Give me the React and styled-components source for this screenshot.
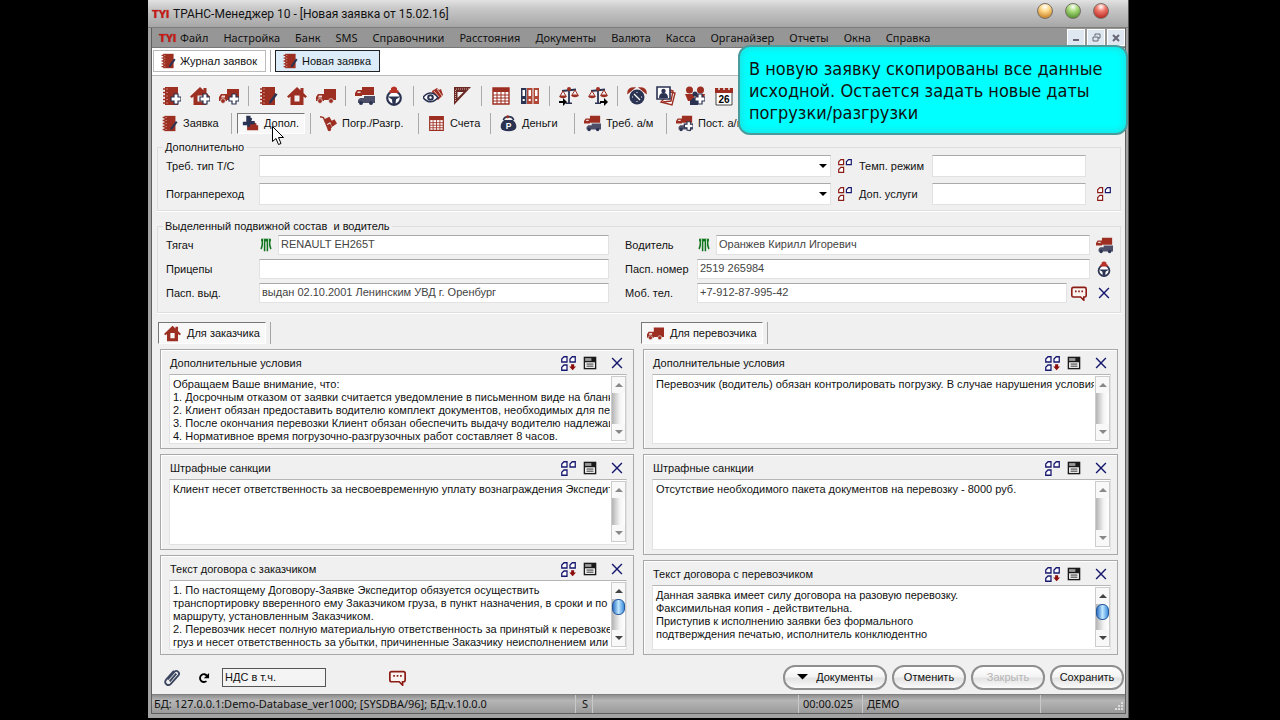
import React from 'react';
import styled, { createGlobalStyle } from 'styled-components';

const RED = '#9c2f22';
const NAVY = '#2b3352';

const GlobalStyle = createGlobalStyle`
  * {
    box-sizing: border-box;
  }
  body {
    margin: 0;
    background: #000;
    color: #111;
    font: 11px/14px 'Liberation Sans', Arial, sans-serif;
  }
  button, input, select, textarea {
    font: inherit;
    color: inherit;
    margin: 0;
  }
`;

const Stage = styled.div`
  display: flex;
  min-height: 100vh;
  padding: 0 151px 3px 148px;
  background: #000;
`;

const Window = styled.div`
  position: relative;
  flex: 1;
  min-width: 0;
  display: flex;
  flex-direction: column;
  padding: 0 2px 4px 3px;
  background: #a3a3a3;
  border-right: 1px solid #555;
`;

const TitleBar = styled.header`
  display: flex;
  align-items: center;
  gap: 4px;
  height: 28px;
  margin: 0 -2px 0 -3px;
  padding: 0 19px 0 4px;
  background: linear-gradient(#e2e2e2, #c9c9c9 30%, #a6a6a6);
  border-bottom: 1px solid #7c7c7c;
`;

const Title = styled.h1`
  flex: 1;
  margin: 0;
  font: 12px/16px Roboto, sans-serif;
`;

const Logo = styled.span`
  width: 17px;
  color: #d01818;
  font: bold 11px/12px 'Liberation Sans', sans-serif;
  text-shadow: 0 0 1px #7a0c0c;
`;

const Orbs = styled.div`
  display: flex;
  gap: 12px;
  margin-bottom: 6px;
`;

const Orb = styled.button`
  width: 16px;
  height: 16px;
  padding: 0;
  border: 1px solid #77706a;
  border-radius: 50%;
  background: radial-gradient(circle at 50% 20%, #fff 0, ${(p) => p.$light} 35%, ${(p) => p.$dark} 90%);
`;

const Client = styled.div`
  flex: 1;
  display: flex;
  flex-direction: column;
  background: #f0f0f0;
  border: 1px solid #5e5e5e;
  border-top: 0;
`;

const MenuBar = styled.nav`
  display: flex;
  align-items: center;
  height: 20px;
  padding: 0 0 0 7px;
  background: #969696;
  border-bottom: 1px solid #777;
`;

const MenuLink = styled.a`
  margin-left: ${(p) => (p.$first ? 4 : 15)}px;
  color: #111;
  font: 11px/18px 'Noto Sans', sans-serif;
  text-decoration: none;
`;

const ChildControls = styled.div`
  display: flex;
  gap: 2px;
  margin-left: auto;
`;

const ChildButton = styled.button`
  display: flex;
  align-items: center;
  justify-content: center;
  width: 18px;
  height: 17px;
  padding: 0;
  border: 1px solid #fff;
  background: #dfe7f1;
`;

const DocTabs = styled.div`
  display: flex;
  align-items: center;
  height: 28px;
  padding: 0 1px 2px;
  background: #fff;
  border-bottom: 1px solid #bbb;
`;

const DocTab = styled.button`
  display: flex;
  align-items: center;
  gap: 4px;
  height: 22px;
  width: ${(p) => p.$w}px;
  padding: 0 6px;
  white-space: nowrap;
  border: 1px solid ${(p) => (p.$active ? '#222' : '#bbb')};
  background: ${(p) => (p.$active ? '#dcecf9' : '#fff')};
`;

const Sep = styled.span`
  width: 1px;
  height: 22px;
  margin: 0 ${(p) => p.$gap || 0}px;
  background: #a5a5a5;
`;

const ToolRow = styled.div`
  display: flex;
  align-items: center;
  height: 30px;
  margin-top: 5px;
  padding-left: 9px;
`;

const ToolGroup = styled.div`
  display: flex;
  gap: 9px;

  & + & {
    margin-left: 9px;
    padding-left: 9px;
    border-left: 1px solid #aaa;
  }
`;

const IconButton = styled.button`
  display: inline-flex;
  flex: none;
  align-items: center;
  justify-content: center;
  width: 20px;
  height: 20px;
  padding: 0;
  border: 0;
  background: none;
`;

const SectionTabs = styled.div`
  display: flex;
  align-items: center;
  height: 29px;
  padding-bottom: 5px;
`;

const SectionCell = styled.div`
  display: flex;
  align-items: center;
  flex: none;
  width: ${(p) => p.$w}px;
  padding: 0 5px;
  border-right: 1px solid #aaa;
`;

const SectionTab = styled.button`
  position: relative;
  display: flex;
  align-items: center;
  gap: 5px;
  height: 21px;
  width: 100%;
  padding: 0 4px;
  border: ${(p) => (p.$active ? '1px solid' : '0')};
  border-color: #777 #fff #fff #777;
  background: ${(p) => (p.$active ? '#f8f8f8' : 'none')};
  text-align: left;
  white-space: nowrap;
`;

const Cursor = styled.svg`
  position: absolute;
  left: 34px;
  top: 12px;
  z-index: 2;
`;

const Group = styled.fieldset`
  min-width: 0;
  margin: 0 4px ${(p) => p.$after}px 5px;
  padding: 0 6px ${(p) => p.$bottom}px 8px;
  border: 1px solid #dedede;
  box-shadow: 0 1px 0 #fff;
`;

const Legend = styled.legend`
  margin-left: -3px;
  padding: 0 2px;
  line-height: 14px;
  white-space: pre;
`;

const ExtraGrid = styled.div`
  display: grid;
  grid-template-columns: 93px 1fr 28px 73px 154px 28px;
  row-gap: 6px;
  align-items: center;
  margin-top: 1px;

  & > button {
    justify-self: center;
  }
  & > button:last-child {
    justify-self: end;
  }
`;

const field = `
  height: 22px;
  width: 100%;
  min-width: 0;
  padding: 0 3px 2px 2px;
  border: 1px solid #e2e2e2;
  border-top-color: #aaa;
  border-radius: 0;
  background: #fff;
  outline: 0;
`;

const Input = styled.input`
  ${field}
  color: #444;
`;

const SlimInput = styled(Input)`
  height: 20px;
`;

const SelectBox = styled.div`
  position: relative;
`;

const Select = styled.select`
  ${field}
  display: block;
  appearance: none;
`;

const Arrow = styled.svg`
  position: absolute;
  right: 4px;
  top: 9px;
  pointer-events: none;
`;

const CrewGrid = styled.div`
  display: grid;
  grid-template-columns: 443fr 489fr;
  column-gap: 16px;
  row-gap: 4px;
  margin-top: 2px;
`;

const CrewRow = styled.div`
  display: flex;
  align-items: center;
  height: 20px;
`;

const CrewLabel = styled.label`
  flex: none;
  width: ${(p) => p.$w}px;
`;

const Tacho = styled.span`
  flex: none;
  display: flex;
  width: 19px;
`;

const Trail = styled.div`
  flex: none;
  display: flex;
  gap: 5px;
  width: ${(p) => (p.$wide ? 47 : 24)}px;
  justify-content: flex-end;
`;

const Columns = styled.div`
  display: grid;
  grid-template-columns: 474fr 475fr;
  column-gap: 9px;
  padding: 0 7px 0 8px;
`;

const Column = styled.section`
  min-width: 0;
`;

const PartyTab = styled.div`
  display: flex;
  align-items: center;
  gap: 4px;
  margin: 0 0 5px -2px;
`;

const PartyButton = styled(SectionTab)`
  width: auto;
  height: 22px;
  gap: 6px;
  padding: 0 5px;
`;

const Panel = styled.div`
  margin-bottom: 5px;
  padding: 0 6px 4px 8px;
  border: 1px solid #a8a8a8;
  box-shadow: inset 1px 1px 0 #fff;
`;

const PanelHead = styled.div`
  display: flex;
  align-items: center;
  height: 24px;
  padding: 2px 0 0 1px;
`;

const PanelTitle = styled.label`
  flex: 1;
`;

const PanelTools = styled.div`
  display: flex;
  gap: 2px;

  & > :last-child {
    margin-left: 5px;
  }
`;

const Memo = styled.div`
  display: flex;
  height: ${(p) => p.$h}px;
  border: 1px solid #e2e2e2;
  border-top-color: #b5b5b5;
  background: #fff;
`;

const MemoText = styled.textarea`
  flex: 1;
  min-width: 0;
  padding: 3px 0 0 3px;
  border: 0;
  resize: none;
  overflow: hidden;
  background: none;
  line-height: 13px;
  outline: 0;
`;

const Track = styled.div`
  display: flex;
  flex-direction: column;
  align-items: center;
  justify-content: space-between;
  width: 15px;
  margin: 1px 0 2px 1px;
  border: 1px solid #ccc;
  background: linear-gradient(90deg, #b4b4b4, #f4f4f4 60%, #fff);
`;

const TrackEnd = styled.button`
  display: flex;
  align-items: center;
  justify-content: center;
  width: 100%;
  height: 16px;
  padding: 0;
  border: 0;
  background: #f8f8f8;
`;

const Thumb = styled.span`
  width: 13px;
  height: 16px;
  margin-bottom: auto;
  border: 1px solid #24569a;
  border-radius: 6px;
  background: linear-gradient(90deg, #2f74c4, #bfe6ff 50%, #3f8fdc);
`;

const Footer = styled.footer`
  display: flex;
  align-items: center;
  height: 34px;
  margin-top: auto;
  padding: 0 1px 0 10px;
`;

const FooterTools = styled.div`
  display: flex;
  gap: 12px;
`;

const VatInput = styled.input`
  width: 104px;
  height: 19px;
  margin: 0 61px 0 8px;
  padding: 0 2px;
  border: 1px solid #555;
  background: #f4f4f4;
`;

const Actions = styled.div`
  display: flex;
  gap: 5px;
  margin-left: auto;
`;

const PillButton = styled.button`
  display: flex;
  align-items: center;
  justify-content: center;
  gap: 8px;
  width: ${(p) => p.$w}px;
  height: 25px;
  padding: 0;
  border: 2px solid #8f8f8f;
  border-radius: 12px;
  background: linear-gradient(#fff, #f3f3f3 48%, #e2e2e2 52%, #fafafa);

  &:disabled {
    color: #b5b5b5;
  }
`;

const StatusBar = styled.div`
  display: grid;
  grid-template-columns: 424fr 17px 206fr 64px 178fr 84px;
  height: 19px;
  background: linear-gradient(#8e8e8e, #b6b6b6 30%, #9a9a9a);
  border-top: 1px solid #808080;
  font: 11px/18px 'Noto Sans', sans-serif;
`;

const StatusCell = styled.div`
  padding-left: ${(p) => p.$pad || 4}px;
  border-right: 1px solid #c9c9c9;
  white-space: nowrap;

  &:last-child {
    display: flex;
    align-items: flex-end;
    justify-content: flex-end;
    border-right: 0;
  }
`;

const Callout = styled.div`
  position: absolute;
  top: 45px;
  right: 0;
  z-index: 3;
  width: 390px;
  padding: 11px 0 9px 9px;
  border: 2px solid #4a9c9c;
  border-radius: 12px;
  background: #00ffff;
  box-shadow: inset 0 0 6px 3px #16e8e8;
  font: 18px/22px 'DejaVu Sans Condensed', Tahoma, sans-serif;
  white-space: nowrap;
`;

// Pictograms, all on a 20x20 grid

const Svg = ({ size = 20, children }) => (
  <svg width={size} height={size} viewBox="0 0 20 20" aria-hidden="true">
    {children}
  </svg>
);

const Plus = () => (
  <path
    d="M13 8h4v3h3v4h-3v3h-4v-3h-3v-4h3z"
    fill="#fff"
    stroke={NAVY}
    strokeWidth="1.2"
  />
);

const BookShape = () => (
  <>
    <path d="M4 1h13v18H4z" fill={RED} />
    <path d="M2 3h4M2 6.500h4M2 10h4M2 13.500h4M2 17h4" stroke={RED} strokeWidth="1.600" />
    <path d="M5.500 3h1M5.500 6.500h1M5.500 10h1M5.500 13.500h1M5.500 17h1" stroke="#e9c4bd" strokeWidth="1.200" />
  </>
);

const HouseShape = () => (
  <path
    d="M10 1L0 10.500l1.800 1.500L3.500 10.500V19h13v-8.500l1.700 1.500 1.800-1.500-3.500-3.500V2h-3v2.200zM7.500 9.500h5v6h-5z"
    fill={RED}
    fillRule="evenodd"
  />
);

const TruckShape = () => (
  <g fill={RED}>
    <path d="M8 3h12v11H8zM2 8h6v7H0v-4z" />
    <circle cx="4" cy="15" r="2.400" stroke="#f0f0f0" strokeWidth=".7" />
    <circle cx="15" cy="15" r="2.400" stroke="#f0f0f0" strokeWidth=".7" />
    <path d="M3 9.500h3v2H2z" fill="#f0d8d4" />
  </g>
);

const TrucksShape = () => (
  <>
    <path d="M7 1h12v8H7zM2 4h5v6H0V7z" fill={RED} />
    <path d="M9 10h11v7H9zM5 12h4v5H3v-3z" fill="#4d4f68" />
    <circle cx="6" cy="17" r="2" fill={NAVY} />
    <circle cx="16" cy="17" r="2" fill={NAVY} />
    <path d="M3 5.500h2.500V7H2z" fill="#f0d8d4" />
  </>
);

const ScaleShape = ({ right }) => (
  <>
    <path d="M10 3v14M3 5l14-1.500" stroke={NAVY} strokeWidth="1.800" />
    <circle cx="10" cy="3" r="2" fill={RED} />
    <path d="M7 18h6v-1.500H7z" fill={NAVY} />
    <path d="M4 5L1 10h6zM16 4l-3 5h6z" fill="none" stroke={RED} />
    <path d="M0 10h8c-1 3-7 3-8 0zM12 9h8c-1 3-7 3-8 0z" fill={RED} />
    <path
      d={right ? 'M12 15h4v-3l4 4-4 4v-3h-4z' : 'M0 15h4v-3l4 4-4 4v-3H0z'}
      fill="#000"
    />
  </>
);

// small sheet of paper with a cut corner
const sheet = (x, y) => `M${x + 3} ${y}h4v7h-7v-4z`;

const PickShape = ({ color = '#16186e' }) => (
  <g fill="#fff" strokeWidth="1.700" stroke={color}>
    <path d={sheet(1, 1)} />
    <path d={sheet(12, 1)} stroke="#16186e" />
    <path d={sheet(1, 12)} />
  </g>
);

const icons = {
  book: (
    <>
      <BookShape />
      <path d="M17.500 7l2 1.500-6 8-2.500 1.500.5-3z" fill={NAVY} />
    </>
  ),
  bookAdd: (
    <>
      <BookShape />
      <Plus />
    </>
  ),
  house: <HouseShape />,
  houseAdd: (
    <>
      <HouseShape />
      <Plus />
    </>
  ),
  truck: <TruckShape />,
  truckAdd: (
    <>
      <TruckShape />
      <Plus />
    </>
  ),
  trucks: <TrucksShape />,
  trucksAdd: (
    <>
      <TrucksShape />
      <Plus />
    </>
  ),
  wheel: (
    <>
      <circle cx="10" cy="12" r="6.800" fill="#fff" stroke={NAVY} strokeWidth="2.200" />
      <path d="M3.500 10.500h13L12 13.500l-.5 5h-3l-.5-5z" fill={NAVY} />
      <path d="M5.500 7V4.500L7 4V2q3-3 6 0v2l1.500.5V7z" fill="#b83228" />
    </>
  ),
  eye: (
    <>
      <path d="M9 5l5-3 2 2 2-1 2 6-5 5-5-4z" fill={RED} />
      <path d="M11 5l5 6M14 3l5 7" stroke="#e8b9b0" />
      <path d="M0 11.500q7.500-9 15 0-7.500 8.500-15 0z" fill="#fff" stroke={NAVY} strokeWidth="1.600" />
      <circle cx="7.500" cy="11.500" r="3.300" fill={NAVY} />
      <circle cx="7.500" cy="11.500" r="1.200" fill="#fff" />
    </>
  ),
  square: (
    <>
      <path d="M2 1h17L2 19zM5.500 6v6l6-6z" fill="#6b2a26" fillRule="evenodd" />
      <path d="M4 3h13M3.500 4v11" stroke="#e0b0a8" strokeDasharray="1 1" />
    </>
  ),
  table: (
    <>
      <path d="M2 2h16v16H2z" fill="#fff" stroke={RED} strokeWidth="1.400" />
      <path d="M2 2h16v4H2z" fill={RED} />
      <path d="M2 9h16M2 12h16M2 15h16M6 6v12M10 6v12M14 6v12" stroke={RED} />
    </>
  ),
  binders: (
    <>
      <path d="M1 2h5.500v16H1z" fill={NAVY} />
      <path d="M7 2h5.500v16H7zM13.500 2H19v16h-5.500z" fill="#b04636" />
      <path d="M2.500 4h2.500v6H2.500zM8.500 4H11v6H8.500zM15 4h2.500v6H15z" fill="#fff" />
      <path d="M3.700 13v2M9.700 13v2M16.200 13v2" stroke="#fff" strokeWidth="2" />
    </>
  ),
  scaleIn: <ScaleShape />,
  scaleOut: <ScaleShape right />,
  alarm: (
    <>
      <path d="M1 7q0-5 6-5zM19 7q0-5-6-5z" fill={RED} stroke={RED} strokeWidth="1.500" />
      <circle cx="10" cy="11" r="7.500" fill={NAVY} />
      <path d="M7 8l3 3M10 11l3 3" stroke="#fff" fill="none" strokeWidth="1.300" />
      <path d="M5 11h1M14 11h1M10 6v1M10 15v1" stroke="#fff" />
    </>
  ),
  photos: (
    <>
      <path d="M14 6l5 1-3 12-11-3z" fill="#fff" stroke={RED} strokeWidth="1.400" />
      <path d="M14 4l3 1-2 10-8 1" fill="none" stroke={RED} strokeWidth="1.400" />
      <path d="M1 1h13v12H1z" fill="#fff" stroke={NAVY} strokeWidth="1.600" />
      <circle cx="7.500" cy="5" r="2.200" fill={NAVY} />
      <path d="M3 12q0-5 4.500-5t4.500 5z" fill={NAVY} />
    </>
  ),
  people: (
    <>
      <circle cx="4.500" cy="4" r="3.500" fill={RED} />
      <circle cx="15.500" cy="4" r="3.500" fill={RED} />
      <path d="M0 8h9v7H3zM11 8h9l-2 7h-7z" fill={RED} />
      <circle cx="10" cy="8" r="2.500" fill={NAVY} />
      <path d="M5 19v-4l3-3h5v7z" fill={NAVY} />
      <Plus />
    </>
  ),
  date: (
    <>
      <path d="M2 3h16v16H2z" fill="#fff" stroke="#444" />
      <path d="M1 2h18v5H1z" fill={RED} />
      <path d="M5 0v4M10 0v4M15 0v4" stroke="#f0f0f0" strokeWidth="1.500" />
      <text x="10" y="17" textAnchor="middle" fontSize="10" fontWeight="bold" fontFamily="Liberation Sans">
        26
      </text>
    </>
  ),
  extra: (
    <>
      <path d="M9 10h4q2-2 4 0v2h2v6H6v-4z" fill={RED} />
      <path d="M5 1h5v2l2 1-1 3h4v4h-5l-1 3H6v-2H1V8h4z" fill={NAVY} />
    </>
  ),
  cart: (
    <>
      <path d="M5 5l6-3 3 5-6 4zM12 8l5-3 3 5-6 4zM8 12l4-2 2 5-3 2z" fill={RED} />
      <path d="M0 2l4 1 6 14" fill="none" stroke={RED} strokeWidth="1.800" />
      <circle cx="11" cy="17" r="2" fill={RED} />
    </>
  ),
  purse: (
    <>
      <path d="M5 6q-5 4-4 9 1 4 9 4t9-4q1-5-4-9z" fill={NAVY} />
      <path d="M4 6q1-4 6-4t6 4" fill="none" stroke={NAVY} strokeWidth="2" />
      <circle cx="9" cy="2" r="1.800" fill={RED} />
      <text x="10" y="16" textAnchor="middle" fontSize="10" fontWeight="bold" fontFamily="Liberation Sans" fill="#fff">
        Р
      </text>
    </>
  ),
  tacho: (
    <>
      <path d="M3 1h14v4H3z" fill="#11741e" />
      <path d="M5 4q0 8-2 12M15 4q0 8 2 12M8 4v15M12 4v15" fill="none" stroke="#11741e" strokeWidth="2.200" />
      <path d="M6.500 1v6M13.500 1v6" stroke="#d9f0d9" strokeWidth="1.200" />
    </>
  ),
  chat: (
    <>
      <path
        d="M3 3h14q2 0 2 2v8q0 2-2 2h-1v4l-4-4H3q-2 0-2-2V5q0-2 2-2z"
        fill="#fbf3f0"
        stroke="#8c1c16"
        strokeWidth="2"
      />
      <path d="M5 8h2M9 8h2M13 8h2" stroke="#8c1c16" strokeWidth="2" />
    </>
  ),
  cross: <path d="M3 3l14 14M17 3L3 17" stroke="#16186e" strokeWidth="2" />,
  save: (
    <>
      <path d="M1 1h18v18H1z" fill="#1a1a1a" />
      <path d="M3 3h9v4H3z" fill="#9a9a9a" />
      <path d="M3 9h14v8H3z" fill="#fff" />
      <path d="M5 11.500h10M5 14.500h10" stroke="#222" strokeWidth="1.400" />
    </>
  ),
  clip: (
    <path
      d="M5 12l7-8q2-2 4 0t0 4l-8 9q-2 2-4.500 0t0-5l8-9M7 14l7-8"
      fill="none"
      stroke="#3c4660"
      strokeWidth="2"
    />
  ),
  redo: (
    <>
      <path d="M13 15.500a6 6 0 1 1 1-8" fill="none" stroke="#000" strokeWidth="2.800" />
      <path d="M17 3v8H9z" fill="#000" />
    </>
  ),
  pick: <PickShape color="#8c1c16" />,
  pickBlue: <PickShape />,
  pickDown: (
    <>
      <PickShape />
      <path d="M13.500 11h4v3h2.500l-4.500 5-4.500-5h2.500z" fill="#8c0c0c" />
    </>
  ),
};

const Icon = ({ name, size }) => <Svg size={size}>{icons[name]}</Svg>;

const Triangle = ({ up, color = '#000', size = 8 }) => (
  <svg width={size} height={size / 2} viewBox="0 0 8 4" aria-hidden="true">
    <path d={up ? 'M0 4h8L4 0z' : 'M0 0h8L4 4z'} fill={color} />
  </svg>
);

const menu = [
  'Файл',
  'Настройка',
  'Банк',
  'SMS',
  'Справочники',
  'Расстояния',
  'Документы',
  'Валюта',
  'Касса',
  'Органайзер',
  'Отчеты',
  'Окна',
  'Справка',
];

const tools = [
  ['bookAdd', 'houseAdd', 'truckAdd'],
  ['book', 'house', 'truck'],
  ['trucks', 'wheel'],
  ['eye', 'square'],
  ['table', 'binders'],
  ['scaleIn', 'scaleOut'],
  ['alarm', 'photos', 'people', 'date'],
];

const sections = [
  { icon: 'book', text: 'Заявка', w: 80 },
  { icon: 'extra', text: 'Допол.', w: 79, active: true },
  { icon: 'cart', text: 'Погр./Разгр.', w: 108 },
  { icon: 'table', text: 'Счета', w: 72 },
  { icon: 'purse', text: 'Деньги', w: 84 },
  { icon: 'trucks', text: 'Треб. а/м', w: 92 },
  { icon: 'trucksAdd', text: 'Пост. а/м', w: 92 },
];

const parties = [
  {
    id: 'customer',
    icon: 'house',
    tab: 'Для заказчика',
    panels: [
      {
        title: 'Дополнительные условия',
        pick: 'pickDown',
        h: 70,
        text: `Обращаем Ваше внимание, что:
1. Досрочным отказом от заявки считается уведомление в письменном виде на бланке
2. Клиент обязан предоставить водителю комплект документов, необходимых для перевозки
3. После окончания перевозки Клиент обязан обеспечить выдачу водителю надлежаще
4. Нормативное время погрузочно-разгрузочных работ составляет 8 часов.`,
      },
      {
        title: 'Штрафные санкции',
        pick: 'pickBlue',
        h: 66,
        text: 'Клиент несет ответственность за несвоевременную уплату вознаграждения Экспедитору',
      },
      {
        title: 'Текст договора с заказчиком',
        pick: 'pickDown',
        h: 70,
        scroll: true,
        text: `1. По настоящему Договору-Заявке Экспедитор обязуется осуществить
транспортировку вверенного ему Заказчиком груза, в пункт назначения, в сроки и по
маршруту, установленным Заказчиком.
2. Перевозчик несет полную материальную ответственность за принятый к перевозке
груз и несет ответственность за убытки, причиненные Заказчику неисполнением или`,
      },
    ],
  },
  {
    id: 'carrier',
    icon: 'truck',
    tab: 'Для перевозчика',
    panels: [
      {
        title: 'Дополнительные условия',
        pick: 'pickDown',
        h: 70,
        text: 'Перевозчик (водитель) обязан контролировать погрузку. В случае нарушения условия',
      },
      {
        title: 'Штрафные санкции',
        pick: 'pickBlue',
        h: 71,
        text: 'Отсутствие необходимого пакета документов на перевозку - 8000 руб.',
      },
      {
        title: 'Текст договора с перевозчиком',
        pick: 'pickDown',
        h: 65,
        scroll: true,
        text: `Данная заявка имеет силу договора на разовую перевозку.
Факсимильная копия - действительна.
Приступив к исполнению заявки без формального
подтверждения печатью, исполнитель конклюдентно`,
      },
    ],
  },
];

const Tool = ({ name, label, size }) => (
  <IconButton type="button" aria-label={label || name}>
    <Icon name={name} size={size} />
  </IconButton>
);

const Combo = ({ id }) => (
  <SelectBox>
    <Select id={id} />
    <Arrow width="8" height="4" viewBox="0 0 8 4">
      <path d="M0 0h8L4 4z" />
    </Arrow>
  </SelectBox>
);

const TextPanel = ({ id, title, pick, h, scroll, text }) => (
  <Panel>
    <PanelHead>
      <PanelTitle htmlFor={id}>{title}</PanelTitle>
      <PanelTools>
        <Tool name={pick} label="Выбрать" size={15} />
        <Tool name="save" label="Сохранить текст" size={14} />
        <Tool name="cross" label="Очистить" size={14} />
      </PanelTools>
    </PanelHead>
    <Memo $h={h}>
      <MemoText id={id} wrap="off" defaultValue={text} />
      <Track>
        <TrackEnd type="button" aria-label="Вверх">
          <Triangle up color={scroll ? '#444' : '#888'} />
        </TrackEnd>
        {scroll && <Thumb />}
        <TrackEnd type="button" aria-label="Вниз">
          <Triangle color={scroll ? '#444' : '#888'} />
        </TrackEnd>
      </Track>
    </Memo>
  </Panel>
);

export default function App() {
  return (
    <Stage>
      <GlobalStyle />
      <Window>
        <TitleBar>
          <Logo>TYI</Logo>
          <Title>ТРАНС-Менеджер 10 - [Новая заявка от 15.02.16]</Title>
          <Orbs>
            <Orb aria-label="Свернуть" $light="#ffd98a" $dark="#c27a1c" />
            <Orb aria-label="Развернуть" $light="#a9dc7c" $dark="#4e8a28" />
            <Orb aria-label="Выход" $light="#f07a6c" $dark="#b3201c" />
          </Orbs>
        </TitleBar>

        <Client>
          <MenuBar>
            <Logo>TYI</Logo>
            {menu.map((item, i) => (
              <MenuLink key={item} href="#" $first={i === 0}>
                {item}
              </MenuLink>
            ))}
            <ChildControls>
              <ChildButton aria-label="Свернуть окно">
                <svg width="8" height="8">
                  <path d="M1 6h6" stroke="#667" strokeWidth="2" />
                </svg>
              </ChildButton>
              <ChildButton aria-label="Восстановить окно">
                <svg width="9" height="9">
                  <path d="M3 3V1h5v4H6M1 4h5v4H1z" fill="none" stroke="#667" />
                </svg>
              </ChildButton>
              <ChildButton aria-label="Закрыть окно">
                <svg width="8" height="8">
                  <path d="M1 1l6 6M7 1L1 7" stroke="#667" strokeWidth="2" />
                </svg>
              </ChildButton>
            </ChildControls>
          </MenuBar>

          <DocTabs>
            <DocTab type="button" $w={113}>
              <Icon name="book" size={16} />
              Журнал заявок
            </DocTab>
            <Sep $gap={4} />
            <DocTab type="button" $active $w={105}>
              <Icon name="book" size={16} />
              Новая заявка
            </DocTab>
          </DocTabs>

          <ToolRow>
            {tools.map((group) => (
              <ToolGroup key={group[0]}>
                {group.map((name) => (
                  <Tool key={name} name={name} />
                ))}
              </ToolGroup>
            ))}
          </ToolRow>

          <SectionTabs>
            {sections.map((s) => (
              <SectionCell key={s.text} $w={s.w}>
                <SectionTab type="button" $active={s.active}>
                  <Icon name={s.icon} size={17} />
                  {s.text}
                  {s.active && (
                    <Cursor width="12" height="19" viewBox="0 0 12 19">
                      <path
                        d="M.5.500v15l3.500-3 2.500 6 2.500-1-2.500-6h5z"
                        fill="#fff"
                        stroke="#000"
                      />
                    </Cursor>
                  )}
                </SectionTab>
              </SectionCell>
            ))}
          </SectionTabs>

          <Group $after={8} $bottom={5}>
            <Legend>Дополнительно</Legend>
            <ExtraGrid>
              <label htmlFor="body-type">Треб. тип Т/С</label>
              <Combo id="body-type" />
              <Tool name="pick" label="Выбрать тип" size={14} />
              <label htmlFor="temp">Темп. режим</label>
              <Input id="temp" />
              <span />
              <label htmlFor="border">Погранпереход</label>
              <Combo id="border" />
              <Tool name="pick" label="Выбрать переход" size={14} />
              <label htmlFor="services">Доп. услуги</label>
              <Input id="services" />
              <Tool name="pick" label="Выбрать услуги" size={14} />
            </ExtraGrid>
          </Group>

          <Group $after={9} $bottom={9}>
            <Legend>{'Выделенный подвижной состав  и водитель'}</Legend>
            <CrewGrid>
              <CrewRow>
                <CrewLabel htmlFor="truck" $w={93}>Тягач</CrewLabel>
                <Tacho><Icon name="tacho" size={14} /></Tacho>
                <SlimInput id="truck" defaultValue="RENAULT EH265T" />
              </CrewRow>
              <CrewRow>
                <CrewLabel htmlFor="driver" $w={72}>Водитель</CrewLabel>
                <Tacho><Icon name="tacho" size={14} /></Tacho>
                <SlimInput id="driver" defaultValue="Оранжев Кирилл Игоревич" />
                <Trail><Tool name="trucks" label="Выбрать экипаж" size={17} /></Trail>
              </CrewRow>
              <CrewRow>
                <CrewLabel htmlFor="trailers" $w={93}>Прицепы</CrewLabel>
                <SlimInput id="trailers" />
              </CrewRow>
              <CrewRow>
                <CrewLabel htmlFor="passport" $w={72}>Пасп. номер</CrewLabel>
                <SlimInput id="passport" defaultValue="2519 265984" />
                <Trail><Tool name="wheel" label="Выбрать водителя" size={16} /></Trail>
              </CrewRow>
              <CrewRow>
                <CrewLabel htmlFor="issued" $w={93}>Пасп. выд.</CrewLabel>
                <SlimInput id="issued" defaultValue="выдан 02.10.2001 Ленинским УВД г. Оренбург" />
              </CrewRow>
              <CrewRow>
                <CrewLabel htmlFor="mobile" $w={72}>Моб. тел.</CrewLabel>
                <SlimInput id="mobile" defaultValue="+7-912-87-995-42" />
                <Trail $wide>
                  <Tool name="chat" label="Отправить SMS" size={16} />
                  <Tool name="cross" label="Удалить" size={14} />
                </Trail>
              </CrewRow>
            </CrewGrid>
          </Group>

          <Columns>
            {parties.map((party) => (
              <Column key={party.id}>
                <PartyTab>
                  <PartyButton type="button" $active>
                    <Icon name={party.icon} size={17} />
                    {party.tab}
                  </PartyButton>
                  <Sep />
                </PartyTab>
                {party.panels.map((panel, i) => (
                  <TextPanel key={panel.title} id={`${party.id}-${i}`} {...panel} />
                ))}
              </Column>
            ))}
          </Columns>

          <Footer>
            <FooterTools>
              <Tool name="clip" label="Вложения" size={19} />
              <Tool name="redo" label="Обновить" size={13} />
            </FooterTools>
            <VatInput aria-label="НДС" defaultValue="НДС в т.ч." />
            <Tool name="chat" label="Сообщение" size={17} />
            <Actions>
              <PillButton type="button" $w={104}>
                <Triangle size={11} />
                Документы
              </PillButton>
              <PillButton type="button" $w={74}>Отменить</PillButton>
              <PillButton type="button" $w={74} disabled>Закрыть</PillButton>
              <PillButton type="button" $w={74}>Сохранить</PillButton>
            </Actions>
          </Footer>

          <StatusBar>
            <StatusCell $pad={2}>БД: 127.0.0.1:Demo-Database_ver1000; [SYSDBA/96]; БД:v.10.0.0</StatusCell>
            <StatusCell $pad={6}>S</StatusCell>
            <StatusCell />
            <StatusCell>00:00.025</StatusCell>
            <StatusCell>ДЕМО</StatusCell>
            <StatusCell>
              <svg width="12" height="12">
                <path d="M8 2h2M5 5h2M8 5h2M2 8h2M5 8h2M8 8h2" stroke="#ddd" strokeWidth="2" />
              </svg>
            </StatusCell>
          </StatusBar>
        </Client>

        <Callout>
          В новую заявку скопированы все данные
          <br />
          исходной. Остается задать новые даты
          <br />
          погрузки/разгрузки
        </Callout>
      </Window>
    </Stage>
  );
}
